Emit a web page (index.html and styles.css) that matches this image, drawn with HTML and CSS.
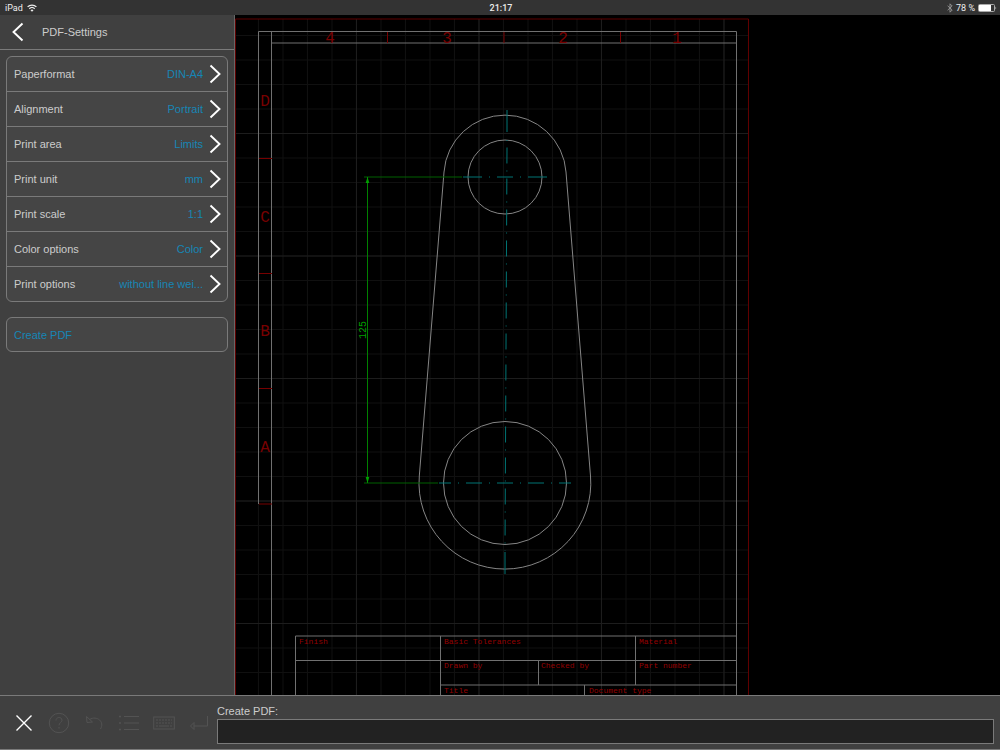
FILE: index.html
```
<!DOCTYPE html>
<html lang="en">
<head>
  <meta charset="UTF-8" />
  <meta name="viewport" content="width=device-width, initial-scale=1.0"/>
  <title>PDF-Settings</title>
  <link rel="stylesheet" href="styles.css">
</head>
<body>
  <svg class="symbols" aria-hidden="true">
    <symbol id="chevron" viewBox="0 0 12 20">
      <path d="M1.5 1.5 L10.5 10 L1.5 18.5" fill="none" stroke="currentColor" stroke-width="1.9"/>
    </symbol>
  </svg>

  <header class="status-bar">
    <div class="status-left">
      <span>iPad</span>
      <svg width="10" height="8" viewBox="0 0 10 8" fill="none" stroke="currentColor" stroke-width="1.3">
        <path d="M0.6 2.9 A6.2 6.2 0 0 1 9.4 2.9"/>
        <path d="M2.3 4.7 A3.9 3.9 0 0 1 7.7 4.7"/>
        <path d="M5 7.8 L3.5 6.2 A2.2 2.2 0 0 1 6.5 6.2 Z" fill="currentColor" stroke="none"/>
      </svg>
    </div>
    <div class="status-time">21:17</div>
    <div class="status-right">
      <svg class="bluetooth" width="6" height="10" viewBox="0 0 6 10" fill="none" stroke="currentColor" stroke-width="0.9">
        <path d="M0.6 2.8 L5.2 7 L3 9.2 V0.8 L5.2 3 L0.6 7.2"/>
      </svg>
      <span>78 %</span>
      <svg width="19" height="8" viewBox="0 0 19 8">
        <rect x="0.5" y="0.5" width="16" height="7" rx="1" fill="none" stroke="#aaa"/>
        <rect x="1" y="1" width="12" height="6" fill="#fff"/>
        <path d="M17.5 2.5 Q19 4 17.5 5.5 Z" fill="#ccc"/>
      </svg>
    </div>
  </header>

  <main class="workspace">
    <aside class="sidebar">
      <div class="sidebar-header">
        <button type="button" class="back-btn" aria-label="Back">
          <svg class="chevron back" width="12" height="20"><use href="#chevron"/></svg>
        </button>
        <h1>PDF-Settings</h1>
      </div>

      <div class="settings">
        <button type="button" class="setting">
          <span class="name">Paperformat</span><span class="value">DIN-A4</span>
          <svg class="chevron" width="12" height="20"><use href="#chevron"/></svg>
        </button>
        <button type="button" class="setting">
          <span class="name">Alignment</span><span class="value">Portrait</span>
          <svg class="chevron" width="12" height="20"><use href="#chevron"/></svg>
        </button>
        <button type="button" class="setting">
          <span class="name">Print area</span><span class="value">Limits</span>
          <svg class="chevron" width="12" height="20"><use href="#chevron"/></svg>
        </button>
        <button type="button" class="setting">
          <span class="name">Print unit</span><span class="value">mm</span>
          <svg class="chevron" width="12" height="20"><use href="#chevron"/></svg>
        </button>
        <button type="button" class="setting">
          <span class="name">Print scale</span><span class="value">1:1</span>
          <svg class="chevron" width="12" height="20"><use href="#chevron"/></svg>
        </button>
        <button type="button" class="setting">
          <span class="name">Color options</span><span class="value">Color</span>
          <svg class="chevron" width="12" height="20"><use href="#chevron"/></svg>
        </button>
        <button type="button" class="setting">
          <span class="name">Print options</span><span class="value">without line wei...</span>
          <svg class="chevron" width="12" height="20"><use href="#chevron"/></svg>
        </button>
      </div>

      <button type="button" class="create-btn">Create PDF</button>
    </aside>

    <section class="canvas">
      <svg class="drawing" viewBox="235 15 765 680" preserveAspectRatio="xMinYMin slice">
        <defs>
          <pattern id="minor" x="234.5" y="11.5" width="24.5" height="24.5" patternUnits="userSpaceOnUse">
            <path d="M24 0 V24.5 M0 24 H24.5" stroke="#101010"/>
          </pattern>
          <pattern id="major" x="234.5" y="11.5" width="122.5" height="122.5" patternUnits="userSpaceOnUse">
            <path d="M122 0 V122.5 M0 122 H122.5" stroke="#1d1d1d"/>
          </pattern>
        </defs>
        <rect x="235" y="19" width="513" height="690" fill="url(#minor)"/>
        <rect x="235" y="19" width="513" height="690" fill="url(#major)"/>

        <!-- sheet limits -->
        <path class="limits" d="M235.5 700 V19 H748.5 V700"/>

        <!-- frame -->
        <g class="frame">
          <path d="M258.5 504 V31.5 H736.5 V700"/>
          <path d="M271.5 700 V31.5 M271.5 43 H736.5"/>
        </g>
        <path class="ticks" d="M387.5 32 V43 M504 32 V43 M620.5 32 V43 M259 158.5 H272 M259 273.5 H272 M259 388.5 H272 M259 504 H272"/>
        <g class="zone">
          <text x="330" y="43">4</text>
          <text x="447" y="43">3</text>
          <text x="563" y="43">2</text>
          <text x="677" y="43">1</text>
          <text x="265" y="106">D</text>
          <text x="265" y="222">C</text>
          <text x="265" y="336">B</text>
          <text x="265" y="452">A</text>
        </g>

        <!-- lever -->
        <g class="part">
          <path d="M419.3 476 L444 172 A61.15 61.15 0 0 1 566 172 L590.5 476 A85.9 85.9 0 1 1 419.3 476 Z"/>
          <circle cx="505" cy="177" r="37"/>
          <circle cx="505" cy="483" r="61.5"/>
        </g>

        <!-- dimension -->
        <g class="dimension">
          <path class="extension" d="M364 177 H462 M364 483 H438"/>
          <path d="M367.5 177 V483"/>
          <path class="arrow" d="M367.5 177 L369.3 183 H365.7 Z M367.5 483 L369.3 477 H365.7 Z"/>
          <text transform="translate(366 330) rotate(-90)">125</text>
        </g>

        <!-- centre lines -->
        <g class="center">
          <path d="M507 110 V132 M507 140 V141"/>
          <path class="dashed" d="M507 147.5 L505 551"/>
          <path d="M505 552 V574"/>
          <path d="M463 177 H466"/>
          <path class="dashed" d="M466 177 H547"/>
          <path d="M544 177 H547"/>
          <path class="dashed clipped" d="M439 483 H571"/>
        </g>

        <!-- title block -->
        <g class="frame">
          <path d="M295.5 700 V636 H736.5 M295.5 660.5 H736.5 M440.5 685 H736.5"/>
          <path d="M440.5 636 V700 M635.5 636 V685 M538.5 660.5 V685 M584.5 685 V700"/>
        </g>
        <g class="caption">
          <text x="299" y="644">Finish</text>
          <text x="444" y="644">Basic Tolerances</text>
          <text x="639" y="644">Material</text>
          <text x="444" y="668">Drawn by</text>
          <text x="541" y="668">Checked by</text>
          <text x="639" y="668">Part number</text>
          <text x="444" y="693">Title</text>
          <text x="589" y="693">Document type</text>
        </g>
      </svg>
    </section>
  </main>

  <footer class="command-bar">
    <div class="tools">
      <button type="button" class="tool active" aria-label="Cancel">
        <svg width="22" height="22" viewBox="0 0 22 22"><path d="M3.5 3.5 L18.5 18.5 M18.5 3.5 L3.5 18.5"/></svg>
      </button>
      <button type="button" class="tool" aria-label="Help" disabled>
        <svg width="22" height="22" viewBox="0 0 22 22">
          <circle cx="11" cy="11" r="9.7"/>
          <path d="M8 8.5 C8 4.5 14 4.5 14 8.3 C14 10.5 11 10.7 11 13.3 M11 15 V16.5"/>
        </svg>
      </button>
      <button type="button" class="tool" aria-label="Undo" disabled>
        <svg width="22" height="22" viewBox="0 0 22 22"><path d="M3.5 4.5 L4 10.5 L9.5 10 Z M6.5 7.5 C14 3 22 10 17.5 17"/></svg>
      </button>
      <button type="button" class="tool" aria-label="List" disabled>
        <svg width="22" height="22" viewBox="0 0 22 22">
          <path d="M6 4.5 H21 M6 11 H21 M6 17.5 H21"/>
          <path d="M1.5 4 H2.5 V5 H1.5 Z M1.5 10.5 H2.5 V11.5 H1.5 Z M1.5 17 H2.5 V18 H1.5 Z"/>
        </svg>
      </button>
      <button type="button" class="tool" aria-label="Keyboard" disabled>
        <svg width="22" height="22" viewBox="0 0 22 22">
          <rect x="0.7" y="5" width="20.6" height="12"/>
          <path d="M3 8 H19 M3 11 H19" stroke-dasharray="2 1"/>
          <path d="M3 14 H5 M6 14 H16 M17 14 H19"/>
        </svg>
      </button>
      <button type="button" class="tool" aria-label="Enter" disabled>
        <svg width="22" height="22" viewBox="0 0 22 22"><path d="M19.5 4 V14 H6 M6 10.5 L2.5 14 L6 17.5 Z"/></svg>
      </button>
    </div>
    <div class="command">
      <label for="command">Create PDF:</label>
      <input type="text" id="command" />
    </div>
  </footer>
</body>
</html>
```

FILE: styles.css
```
:root {
  --bar-bg: #333;
  --panel-bg: #404040;
  --row-bg: #454545;
  --line: #7a7a7a;
  --text: #ccc;
  --accent: #1685b5;
}

* {
  margin: 0;
  padding: 0;
  box-sizing: border-box;
}

body {
  height: 100vh;
  display: flex;
  flex-direction: column;
  overflow: hidden;
  background-color: #000;
  color: var(--text);
  font-family: 'Liberation Sans', Arial, sans-serif;
  font-size: 11px;
}

button {
  background: none;
  border: none;
  color: inherit;
  font: inherit;
  cursor: pointer;
}

.symbols {
  display: none;
}

/* status bar */
.status-bar {
  height: 15px;
  flex: none;
  display: grid;
  grid-template-columns: 1fr auto 1fr;
  align-items: center;
  padding: 0 3px 0 5px;
  background-color: var(--bar-bg);
  color: #eee;
  font-family: Roboto, sans-serif;
  font-size: 9px;
}

.status-left,
.status-right {
  display: flex;
  align-items: center;
  gap: 4px;
}

.status-right {
  justify-content: flex-end;
  gap: 3px;
}

.status-time {
  font-weight: 500;
}

.bluetooth {
  color: #999;
}

/* sidebar */
.workspace {
  flex: 1;
  min-height: 0;
  display: flex;
}

.sidebar {
  width: 235px;
  flex: none;
  background-color: var(--panel-bg);
  border-right: 1px solid #666;
}

.sidebar-header {
  height: 35px;
  display: flex;
  align-items: center;
  gap: 18px;
  padding-left: 12px;
  border-bottom: 1px solid var(--line);
}

.sidebar-header h1 {
  font-size: 11px;
  font-weight: 400;
}

.back-btn,
.tool {
  display: flex;
}

.chevron {
  flex: none;
  color: #fff;
}

.chevron.back {
  transform: rotate(180deg);
}

.settings,
.create-btn {
  margin: 6px 6px 0;
  background-color: var(--row-bg);
  border: 1px solid var(--line);
  border-radius: 6px;
}

.setting {
  width: 100%;
  height: 34px;
  display: flex;
  align-items: center;
  gap: 6px;
  padding: 0 6px 0 7px;
}

.setting + .setting {
  height: 35px;
  border-top: 1px solid var(--line);
}

.value {
  margin-left: auto;
  color: var(--accent);
}

.create-btn {
  display: block;
  width: calc(100% - 12px);
  height: 35px;
  margin-top: 15px;
  padding: 0 7px;
  color: var(--accent);
  text-align: left;
}

/* drawing */
.canvas {
  flex: 1;
  min-width: 0;
  background-color: #000;
}

.drawing {
  display: block;
  width: 100%;
  height: 100%;
}

.drawing path,
.drawing circle {
  fill: none;
}

.limits {
  stroke: #600000;
}

.frame {
  stroke: #707070;
}

.part {
  stroke: #858585;
}

.ticks {
  stroke: #780000;
}

.zone,
.caption {
  fill: #780000;
  font-family: 'Liberation Mono', monospace;
  font-size: 16px;
}

.zone {
  text-anchor: middle;
}

.caption {
  fill: #940000;
  font-size: 8px;
}

.dimension {
  stroke: #008000;
}

.extension {
  stroke: #006000;
}

.drawing .arrow {
  fill: #00a000;
  stroke: none;
}

.dimension text {
  fill: #00a000;
  stroke: none;
  text-anchor: middle;
  font-family: 'Liberation Mono', monospace;
  font-size: 10px;
}

.center {
  stroke: #007474;
}

.dashed {
  stroke-dasharray: 16 7 1 7;
}

.clipped {
  stroke-dashoffset: 4;
}

/* command bar */
.command-bar {
  height: 55px;
  flex: none;
  display: flex;
  background-color: var(--panel-bg);
  border-top: 1px solid var(--line);
  border-bottom: 1px solid var(--line);
}

.tools {
  display: flex;
  align-items: center;
  gap: 13px;
  padding: 0 7px 0 13px;
}

.tool svg {
  fill: none;
  stroke: #535353;
}

.tool.active svg {
  stroke: #fff;
  stroke-width: 1.4;
}

.command {
  flex: 1;
  display: flex;
  flex-direction: column;
  padding: 7px 6px 5px 0;
}

.command label {
  line-height: 16px;
}

.command input {
  width: 100%;
  height: 25px;
  padding: 0 6px;
  background-color: #222;
  border: 1px solid var(--line);
  color: var(--text);
  font: inherit;
  outline: none;
}
```
